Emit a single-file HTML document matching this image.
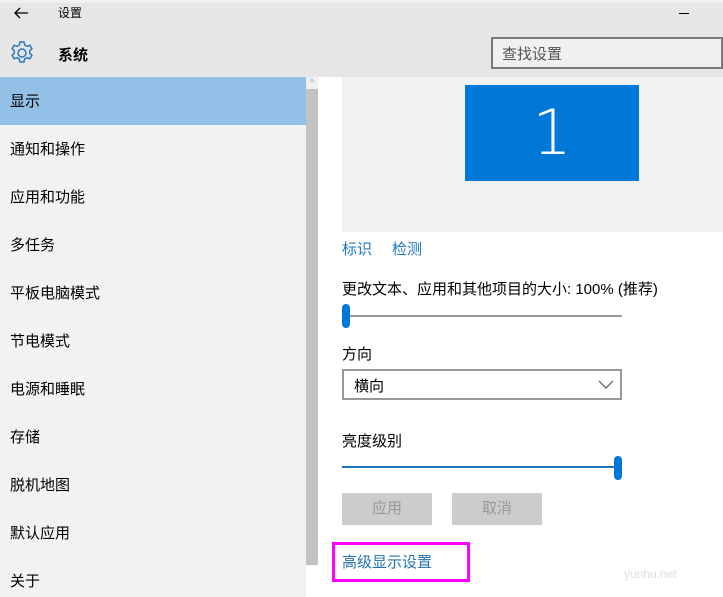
<!DOCTYPE html><html><head><meta charset="utf-8"><style>
*{margin:0;padding:0;box-sizing:border-box}
body{width:723px;height:597px;overflow:hidden;background:#fff;font-family:"Liberation Sans","Microsoft YaHei","Noto Sans CJK SC",sans-serif;position:relative;color:#000}
.a{position:absolute}
.hdr{left:0;top:0;width:723px;height:77px;background:#e6e6e6}
.side{left:0;top:77px;width:306px;height:520px;background:#f2f2f2}
.it{position:absolute;left:10px;font-size:15px;line-height:20px}
.lnk{color:#1e78c0;font-size:15px}
.btn{background:#ccc;color:#999;font-size:15px;text-align:center;line-height:32px;width:90px;height:32px}
</style></head><body>
<div class="a hdr"></div>
<div class="a" style="left:0;top:0;width:723px;height:3px;background:#f0f0f0"></div>
<svg class="a" style="left:13px;top:6px" width="16" height="14"><path d="M15 7H2M7 2L2 7l5 5" stroke="#000" stroke-width="1.3" fill="none"/></svg>
<div class="a" style="left:58px;top:4px;font-size:12px">设置</div>
<div class="a" style="left:679px;top:13px;width:10px;height:1px;background:#000"></div>
<svg class="a" style="left:9px;top:40px" width="26" height="26" viewBox="0 0 26 26"><g fill="none" stroke="#2b79c2" stroke-width="1.5"><circle cx="13" cy="13" r="4"/><path d="M11 2h4l.7 3 2.3 1.3 2.9-1 2 3.4-2.2 2.1v2.4l2.2 2.1-2 3.4-2.9-1-2.3 1.3-.7 3h-4l-.7-3-2.3-1.3-2.9 1-2-3.4 2.2-2.1v-2.4L3.1 8.7l2-3.4 2.9 1 2.3-1.3z"/></g></svg>
<div class="a" style="left:58px;top:44px;font-size:15px;font-weight:bold">系统</div>
<div class="a" style="left:491px;top:37px;width:232px;height:32px;border:2px solid #7a7a7a;background:#f0f0f0"></div>
<div class="a" style="left:502px;top:43px;font-size:15px;color:#555">查找设置</div>
<div class="a side"></div>
<div class="a" style="left:0;top:77px;width:306px;height:48px;background:#92c0e6"></div>
<div class="it" style="top:92px">显示</div>
<div class="it" style="top:140px">通知和操作</div>
<div class="it" style="top:188px">应用和功能</div>
<div class="it" style="top:236px">多任务</div>
<div class="it" style="top:284px">平板电脑模式</div>
<div class="it" style="top:332px">节电模式</div>
<div class="it" style="top:380px">电源和睡眠</div>
<div class="it" style="top:428px">存储</div>
<div class="it" style="top:476px">脱机地图</div>
<div class="it" style="top:524px">默认应用</div>
<div class="it" style="top:572px">关于</div>
<div class="a" style="left:306px;top:77px;width:12px;height:12px;background:#f0f0f0;font-size:8px;color:#888;text-align:center;line-height:12px">^</div>
<div class="a" style="left:306px;top:89px;width:12px;height:476px;background:#c2c2c2"></div>
<div class="a" style="left:342px;top:77px;width:381px;height:155px;background:#f2f2f2"></div>
<div class="a" style="left:465px;top:85px;width:174px;height:96px;background:#0078d7;color:#fff;font-size:62px;font-weight:200;text-align:center;line-height:96px;font-family:'DejaVu Sans',sans-serif;-webkit-text-stroke:0">1</div>
<div class="a lnk" style="left:342px;top:238px">标识</div>
<div class="a lnk" style="left:392px;top:238px">检测</div>
<div class="a" style="left:342px;top:278px;font-size:15px">更改文本、应用和其他项目的大小: 100% (推荐)</div>
<div class="a" style="left:342px;top:315px;width:280px;height:2px;background:#999"></div>
<div class="a" style="left:342px;top:304px;width:8px;height:24px;border-radius:4px;background:#0078d7"></div>
<div class="a" style="left:342px;top:343px;font-size:15px">方向</div>
<div class="a" style="left:342px;top:369px;width:280px;height:31px;border:2px solid #999;background:#fff"></div>
<div class="a" style="left:354px;top:375px;font-size:15px">横向</div>
<svg class="a" style="left:598px;top:380px" width="16" height="10"><path d="M1 1l7 7 7-7" stroke="#555" fill="none" stroke-width="1.2"/></svg>
<div class="a" style="left:342px;top:430px;font-size:15px">亮度级别</div>
<div class="a" style="left:342px;top:466px;width:280px;height:2px;background:#1e73b9"></div>
<div class="a" style="left:614px;top:456px;width:8px;height:24px;border-radius:4px;background:#0078d7"></div>
<div class="a btn" style="left:342px;top:493px">应用</div>
<div class="a btn" style="left:452px;top:493px">取消</div>
<div class="a" style="left:332px;top:542px;width:138px;height:40px;border:3px solid #f0f"></div>
<div class="a lnk" style="left:342px;top:551px;color:#2570b0">高级显示设置</div>
<div class="a" style="left:624px;top:567px;font-size:12px;color:#ddd">yunhu.net</div>
</body></html>
